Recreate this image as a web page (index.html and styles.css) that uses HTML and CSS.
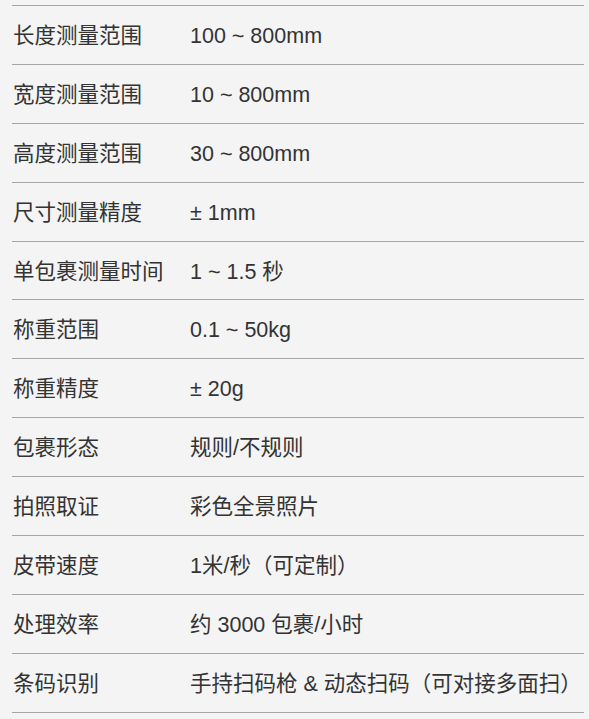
FILE: index.html
```html
<!DOCTYPE html>
<html lang="zh">
<head>
<meta charset="utf-8">
<link rel="stylesheet" href="styles.css">
</head>
<body>
<div class="spec">
  <div class="row"><div class="k">长度测量范围</div><div class="v">100 ~ 800mm</div></div>
  <div class="row"><div class="k">宽度测量范围</div><div class="v">10 ~ 800mm</div></div>
  <div class="row"><div class="k">高度测量范围</div><div class="v">30 ~ 800mm</div></div>
  <div class="row"><div class="k">尺寸测量精度</div><div class="v">± 1mm</div></div>
  <div class="row"><div class="k">单包裹测量时间</div><div class="v">1 ~ 1.5 秒</div></div>
  <div class="row"><div class="k">称重范围</div><div class="v">0.1 ~ 50kg</div></div>
  <div class="row"><div class="k">称重精度</div><div class="v">± 20g</div></div>
  <div class="row"><div class="k">包裹形态</div><div class="v">规则/不规则</div></div>
  <div class="row"><div class="k">拍照取证</div><div class="v">彩色全景照片</div></div>
  <div class="row"><div class="k">皮带速度</div><div class="v">1米/秒（可定制）</div></div>
  <div class="row"><div class="k">处理效率</div><div class="v">约 3000 包裹/小时</div></div>
  <div class="row"><div class="k">条码识别</div><div class="v">手持扫码枪 &amp; 动态扫码（可对接多面扫）</div></div>
</div>
</body>
</html>
```
FILE: styles.css
```css
html, body {
  margin: 0;
  padding: 0;
  background: #f4f4f4;
}
body {
  font-family: "Liberation Sans", Arial, "Noto Sans CJK SC", sans-serif;
  color: #333;
  font-size: 21.5px;
  line-height: 25px;
  overflow: hidden;
}
.spec {
  margin: 5px 5px 0 12px;
  border-bottom: 1px solid #a6a6a6;
}
.row {
  box-sizing: border-box;
  display: flex;
  align-items: center;
  height: 58.9px;
  padding-top: 3px;
  border-top: 1px solid #a6a6a6;
}
.k {
  width: 177px;
  padding-left: 1px;
  white-space: nowrap;
}
.v {
  white-space: nowrap;
}
```
